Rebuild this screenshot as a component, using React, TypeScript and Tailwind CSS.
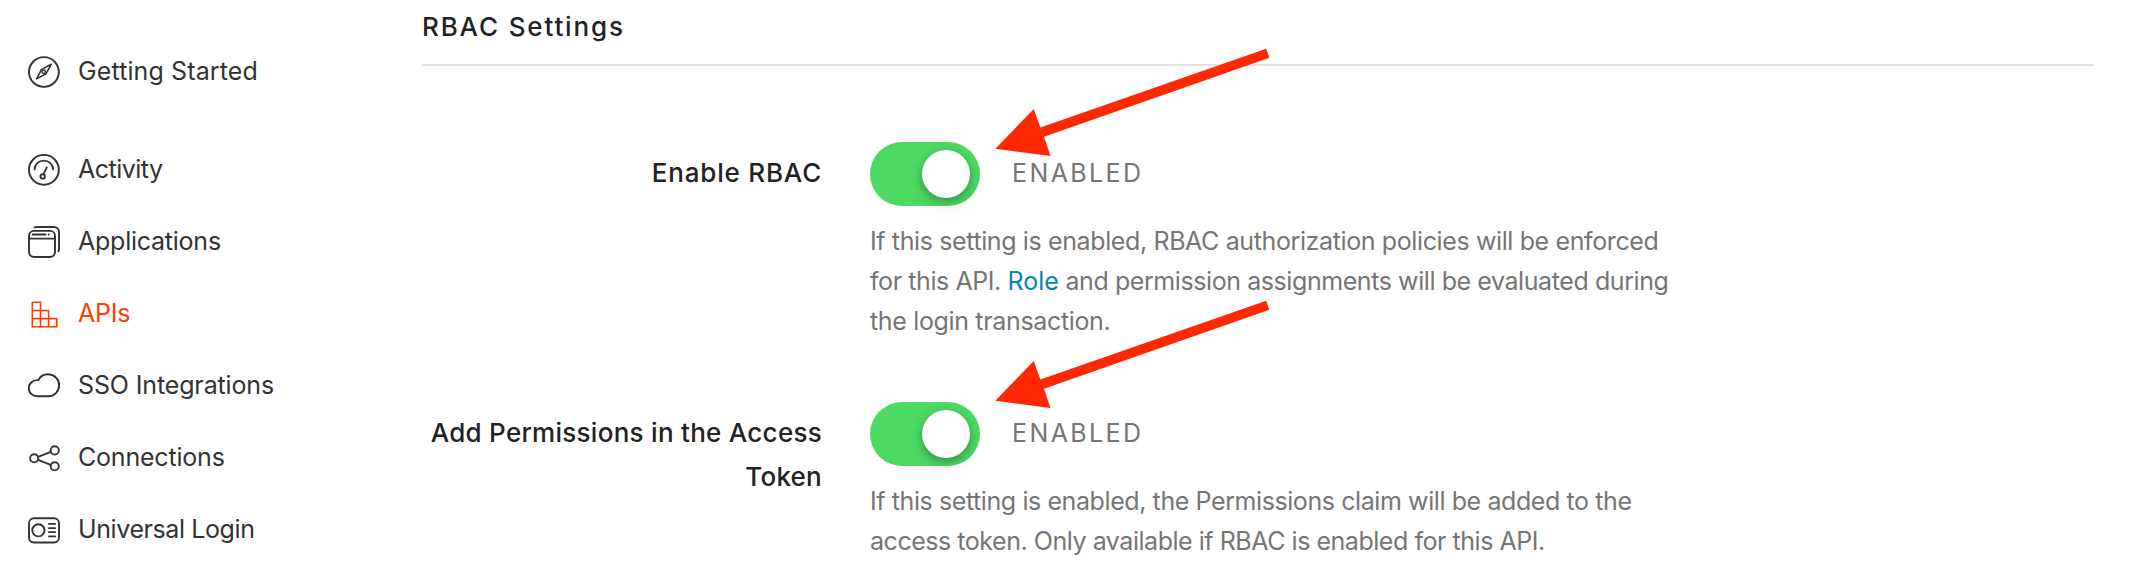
import type { ReactNode } from "react";

function Icon({ children }: { children: ReactNode }) {
  return (
    <svg
      className="h-8 w-8 shrink-0"
      viewBox="0 0 32 32"
      fill="none"
      stroke="currentColor"
      strokeWidth="1.9"
      strokeLinecap="round"
      strokeLinejoin="round"
      aria-hidden="true"
    >
      {children}
    </svg>
  );
}

const compass = (
  <Icon>
    <circle cx="15.9" cy="16" r="14.9" />
    <path d="M23.2 8.3 18 17.7 8.6 22.9 13.4 13.6Z" strokeWidth="1.6" />
    <circle cx="15.7" cy="15.7" r="1.7" strokeWidth="1.4" />
  </Icon>
);

const gauge = (
  <Icon>
    <circle cx="15.9" cy="15.8" r="14.9" />
    <path d="M6.6 15.2a9.2 8.6 0 0 1 18.4 0M18.8 13.4l-3.3 6.8" />
    <circle cx="14.7" cy="22.4" r="2.2" />
  </Icon>
);

const windows = (
  <Icon>
    <rect x="1" y="4.9" width="26" height="26.1" rx="5" />
    <path d="M1 12.7h26" strokeWidth="1.7" />
    <path d="M4.6 8.5h13M20.6 8.5h.2" strokeWidth="1.8" />
    <path d="M6.6 1.4C7.4 1.1 8.2 1 9 1h17a5 5 0 0 1 5 5v16.7c0 1-.2 1.9-.6 2.7" />
  </Icon>
);

const blocks = (
  <Icon>
    <path
      d="M4.3 4.3h8.2v24.4M4.3 4.3v24.4h24.5v-8.1H4.3M4.3 12.5h16.3v16.2"
      strokeWidth="1.6"
      strokeLinejoin="miter"
      strokeLinecap="butt"
    />
  </Icon>
);

const cloud = (
  <Icon>
    <path d="M8.9 26.3a8.1 8.1 0 0 1 0-16.2h1.5c1.8-3.5 5.6-5.8 9.8-5.8a11 11 0 0 1 0 22Z" />
  </Icon>
);

const share = (
  <Icon>
    <circle cx="6.2" cy="16.3" r="4.1" />
    <circle cx="26.7" cy="8.4" r="4.1" />
    <circle cx="26.7" cy="24.3" r="4.1" />
    <path d="m10.1 14.8 12.7-5M10.1 17.8l12.7 5" />
  </Icon>
);

const idCard = (
  <Icon>
    <rect x="1" y="4.3" width="30" height="24.2" rx="5" />
    <circle cx="10.4" cy="16.3" r="6.1" />
    <path d="M20.9 9.9h6.3M20.9 14.2h6.3M20.9 18.2h6.3M20.9 22.4h6.3" strokeWidth="1.7" />
  </Icon>
);

const navItems = [
  { label: "Getting Started", icon: compass, style: "mb-[26px] text-[#333] tracking-[0.118px]" },
  { label: "Activity", icon: gauge, style: "text-[#333] tracking-[-0.5px]" },
  { label: "Applications", icon: windows, style: "text-[#333] tracking-[-0.24px]" },
  { label: "APIs", icon: blocks, style: "text-[#ff3e00] tracking-[-0.2px]" },
  { label: "SSO Integrations", icon: cloud, style: "text-[#333] tracking-[-0.133px]" },
  { label: "Connections", icon: share, style: "text-[#333] tracking-[-0.2px]" },
  { label: "Universal Login", icon: idCard, style: "text-[#333] tracking-[-0.4px]" },
];

function Toggle() {
  return (
    <button
      type="button"
      role="switch"
      aria-checked="true"
      className="flex h-16 w-[110px] items-center justify-end rounded-full bg-[#4cd964] pr-2.5"
    >
      <span className="h-12 w-12 rounded-full bg-white shadow-[0_3px_8px_rgba(0,0,0,0.3),0_8px_24px_rgba(0,0,0,0.07)]" />
    </button>
  );
}

function Arrow({ position }: { position: string }) {
  return (
    <svg
      className={`pointer-events-none absolute left-[125px] h-[110px] w-[275px] ${position}`}
      viewBox="995 48 275 110"
      fill="#ff2800"
      aria-hidden="true"
    >
      <path d="M995.3 148.7 1033.8 109 1040.4 127.6 1266.2 48.8 1269.3 57.8 1044 136.8 1050.5 156Z" />
    </svg>
  );
}

function Setting({ label, arrow, children }: { label: ReactNode; arrow: string; children: ReactNode }) {
  return (
    <div className="flex">
      <div className="w-[400px] shrink-0 pt-[9px] text-right text-[26px] leading-[44px] font-medium text-[#222]">
        {label}
      </div>
      <div className="relative ml-12">
        <div className="flex items-center gap-8">
          <Toggle />
          <span className="pb-0.5 text-[25px] leading-10 tracking-[2.4px] text-[#757575]">ENABLED</span>
        </div>
        <div className="mt-[15px] text-[25px] leading-10 whitespace-nowrap text-[#757575]">{children}</div>
        <Arrow position={arrow} />
      </div>
    </div>
  );
}

export default function App() {
  return (
    <div className="flex h-[580px] w-[2134px] overflow-hidden bg-white font-['Inter',sans-serif]">
      <nav className="flex w-[422px] shrink-0 flex-col pt-9 pl-7">
        {navItems.map((item) => (
          <a key={item.label} className={`flex h-[72px] shrink-0 items-center gap-[18px] text-[25px] leading-10 ${item.style}`}>
            {item.icon}
            <span className="pb-0.5">{item.label}</span>
          </a>
        ))}
      </nav>
      <main className="w-[1672px]">
        <h2 className="h-[66px] border-b-2 border-[#e1e1e1] pt-[7px] text-[26px] leading-10 font-medium tracking-[1.85px] text-[#222]">
          RBAC Settings
        </h2>
        <div className="flex flex-col gap-[61px] pt-[76px]">
          <Setting arrow="-top-[94px]" label={<div className="tracking-[0.8px]">Enable RBAC</div>}>
            <p className="tracking-[-0.381px]">If this setting is enabled, RBAC authorization policies will be enforced</p>
            <p className="tracking-[-0.42px]">
              for this API. <a className="tracking-normal text-[#0a84ae]">Role</a> and permission assignments will be evaluated during
            </p>
            <p className="tracking-[-0.343px]">the login transaction.</p>
          </Setting>
          <Setting
            arrow="-top-[102px]"
            label={
              <>
                <div className="tracking-[0.274px]">Add Permissions in the Access</div>
                <div className="tracking-[0.25px]">Token</div>
              </>
            }
          >
            <p className="tracking-[-0.41px]">If this setting is enabled, the Permissions claim will be added to the</p>
            <p className="tracking-[-0.462px]">access token. Only available if RBAC is enabled for this API.</p>
          </Setting>
        </div>
      </main>
    </div>
  );
}
